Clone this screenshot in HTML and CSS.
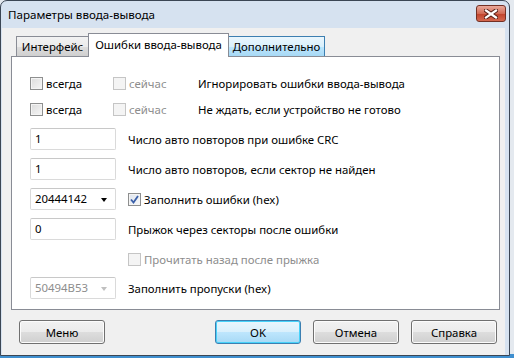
FILE: index.html
```html
<!DOCTYPE html>
<html lang="ru">
<head>
    <meta charset="UTF-8">
    <title>Параметры ввода-вывода</title>
    <link rel="stylesheet" href="styles.css">
</head>
<body>
    <div class="window">
        <div class="titlebar">
            <span class="title">Параметры ввода-вывода</span>
            <div class="close">
                <svg width="14" height="10" viewBox="0 0 14 10">
                    <path d="M2 1.5 L12 8.5 M12 1.5 L2 8.5" stroke="#5a2118" stroke-width="4.2" stroke-linecap="square"/>
                    <path d="M2 1.5 L12 8.5 M12 1.5 L2 8.5" stroke="#fff" stroke-width="2.2" stroke-linecap="square"/>
                </svg>
            </div>
        </div>
        <div class="client">
            <div class="tabs">
                <div class="tab first">Интерфейс</div>
                <div class="tab selected">Ошибки ввода-вывода</div>
                <div class="tab hover">Дополнительно</div>
            </div>
            <div class="panel">
                <div class="row checks first">
                    <label class="check"><span class="box"></span>всегда</label>
                    <label class="check disabled"><span class="box"></span>сейчас</label>
                    <span class="desc">Игнорировать ошибки ввода-вывода</span>
                </div>
                <div class="row checks">
                    <label class="check"><span class="box"></span>всегда</label>
                    <label class="check disabled"><span class="box"></span>сейчас</label>
                    <span class="desc">Не ждать, если устройство не готово</span>
                </div>
                <div class="row">
                    <div class="field">1</div>
                    <span>Число авто повторов при ошибке CRC</span>
                </div>
                <div class="row">
                    <div class="field">1</div>
                    <span>Число авто повторов, если сектор не найден</span>
                </div>
                <div class="row">
                    <div class="field combo">20444142<span class="arrow"></span></div>
                    <label class="check"><span class="box checked">
                        <svg width="9" height="9" viewBox="0 0 9 9"><path d="M1 4.5 L3.5 7.5 L8 1" fill="none" stroke="#3a5fa8" stroke-width="1.8"/></svg>
                    </span>Заполнить ошибки (hex)</label>
                </div>
                <div class="row">
                    <div class="field">0</div>
                    <span>Прыжок через секторы после ошибки</span>
                </div>
                <div class="row solo">
                    <label class="check disabled"><span class="box"></span>Прочитать назад после прыжка</label>
                </div>
                <div class="row last">
                    <div class="field combo disabled">50494B53<span class="arrow"></span></div>
                    <span>Заполнить пропуски (hex)</span>
                </div>
            </div>
            <div class="buttons">
                <button class="btn">Меню</button>
                <span class="spacer"></span>
                <button class="btn default">OK</button>
                <button class="btn">Отмена</button>
                <button class="btn">Справка</button>
            </div>
        </div>
    </div>
</body>
</html>
```

FILE: styles.css
```css
body { margin: 0; background: linear-gradient(#e4e9ef 354px, #3f8fcf 354px); font-family: 'Noto Sans', sans-serif; font-size: 11.4px; color: #000; width: 514px; height: 358px; overflow: hidden; }
.window { width: 508px; height: 354px; border: 1px solid #3b4654; border-radius: 7px 7px 0 0; background: #d6e2f0; }
.titlebar { height: 27px; display: flex; align-items: center; padding: 0 3px 0 7px; }
.title { flex: 1; font-size: 11.6px; }
.close { width: 28px; height: 15px; margin-top: -2px; border: 1px solid #733024; border-radius: 3px; background: linear-gradient(#e9a99b, #d26b55 50%, #c0412a 51%, #d4684f); display: flex; align-items: center; justify-content: center; }
.client { margin-left: 1px; width: 503px; height: 327px; background: #f0f0f0; padding: 5px 0 0 0; box-sizing: border-box; }
.tabs { display: flex; align-items: flex-end; height: 23px; padding-left: 12px; }
.tab { height: 19px; line-height: 20px; text-align: center; border: 1px solid #898c95; border-bottom: none; border-right: none; background: linear-gradient(#f2f2f2, #ebebeb 50%, #dddddd 51%, #cfcfcf); }
.tab.first { width: 71px; margin-left: 2px; }
.tab.selected { width: 139px; height: 23px; line-height: 21px; margin-bottom: -1px; background: #fff; border-right: 1px solid #898c95; position: relative; z-index: 1; }
.tab.hover { width: 95px; border: 1px solid #3c7fb1; border-bottom: none; border-left: none; background: linear-gradient(#eaf6fd, #d9f0fc 50%, #bee6fd 51%, #a7d9f5); }
.panel { margin-left: 9px; width: 489px; height: 254px; border: 1px solid #898c95; background: #fff; padding: 15px 0 0 18px; box-sizing: border-box; }
.row { display: flex; align-items: center; height: 22px; margin-bottom: 8px; gap: 12px; }
.row.first { margin-bottom: 4px; }
.row.solo { padding-left: 98px; margin-bottom: 7px; margin-top: 1px; }
.check { display: flex; align-items: center; gap: 3px; }
.checks { gap: 0; }
.checks .check:first-child { width: 83px; }
.checks .check.disabled { width: 85px; }
.box { width: 11px; height: 11px; border: 1px solid #8e8f8f; background: linear-gradient(135deg, #dcdcdc, #f6f6f6); box-shadow: inset 0 0 0 1px #f4f4f4; display: flex; align-items: center; justify-content: center; }
.check.disabled { color: #8d8d8d; }
.check.disabled .box { border-color: #c5c5c5; background: #f4f4f4; box-shadow: none; }
.box.checked { background: linear-gradient(135deg, #dde4ee, #f8f8f8); }
.field { width: 78px; height: 20px; line-height: 20px; padding-left: 4px; padding-right: 2px; color: #000; border: 1px solid #dadada; border-top-color: #c8c8c8; border-radius: 2px; position: relative; }
.combo .arrow { position: absolute; right: 8px; top: 9px; border-left: 3.5px solid transparent; border-right: 3.5px solid transparent; border-top: 4px solid #000; }
.combo.disabled { color: #8d8d8d; }
.combo.disabled .arrow { border-top-color: #c0c0c0; }
.buttons { display: flex; gap: 12px; padding: 10px 8px 0 17px; }
.spacer { flex: 1; }
.btn { width: 86px; height: 24px; font-family: inherit; font-size: 11.4px; color: #000; border: 1px solid #707070; border-radius: 3px; background: linear-gradient(#f2f2f2, #ebebeb 50%, #dddddd 51%, #cfcfcf); box-shadow: inset 0 0 0 1px #fcfcfc; padding: 0; }
.btn.default { border-color: #3c7fb1; background: linear-gradient(#eaf6fd, #d9f0fc 50%, #bee6fd 51%, #a7d9f5); box-shadow: inset 0 0 0 1px #48d2f9; }
```
